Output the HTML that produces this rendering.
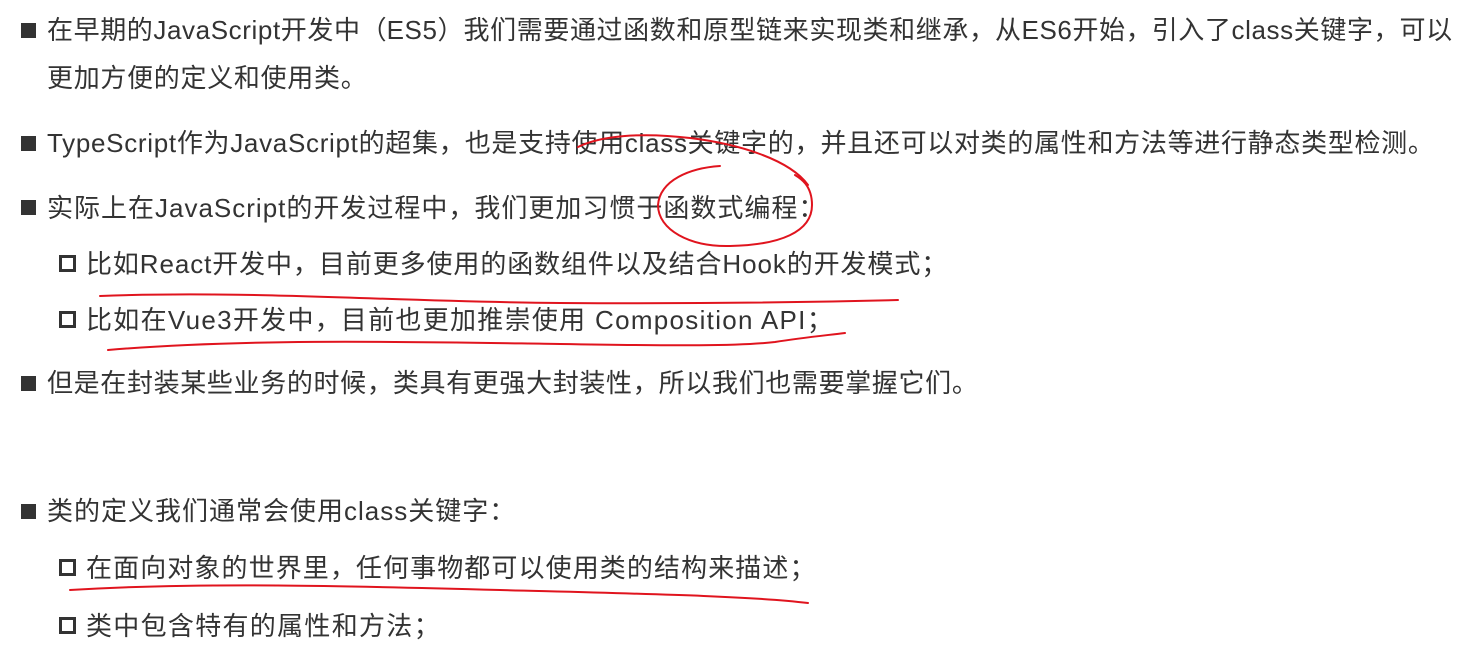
<!DOCTYPE html>
<html><head><meta charset="utf-8"><style>
html,body{margin:0;padding:0;background:#fff;width:1473px;height:664px;overflow:hidden;position:relative}
.l{position:absolute;white-space:nowrap;font-family:"Liberation Sans","Noto Sans CJK SC",sans-serif;font-size:26px;color:#333;line-height:30px;letter-spacing:0.7px}
.l i{font-style:normal;display:inline-block;width:26px;text-align:center}
.b{position:absolute;width:15px;height:15px;background:#333}
.s{position:absolute;width:11px;height:11px;border:3.5px solid #333}
svg{position:absolute;left:0;top:0}
</style></head><body>
<div class="b" style="left:21px;top:23px"></div>
<div class="l" style="left:47px;top:15px;letter-spacing:0.6px">在早期的JavaScript开发中<i>（</i>ES5<i>）</i>我们需要通过函数和原型链来实现类和继承<i>，</i>从ES6开始<i>，</i>引入了class关键字<i>，</i>可以</div>
<div class="l" style="left:47px;top:63px">更加方便的定义和使用类<i>。</i></div>
<div class="b" style="left:21px;top:136px"></div>
<div class="l" style="left:47px;top:128px">TypeScript作为JavaScript的超集<i>，</i>也是支持使用class关键字的<i>，</i>并且还可以对类的属性和方法等进行静态类型检测<i>。</i></div>
<div class="b" style="left:21px;top:200px"></div>
<div class="l" style="left:47px;top:193px;letter-spacing:1px">实际上在JavaScript的开发过程中<i>，</i>我们更加习惯于函数式编程<i>：</i></div>
<div class="s" style="left:59px;top:255px"></div>
<div class="l" style="left:86px;top:249px;letter-spacing:0.9px">比如React开发中<i>，</i>目前更多使用的函数组件以及结合Hook的开发模式<i>；</i></div>
<div class="s" style="left:59px;top:311px"></div>
<div class="l" style="left:86px;top:305px;letter-spacing:1.3px">比如在Vue3开发中<i>，</i>目前也更加推崇使用 Composition API<i>；</i></div>
<div class="b" style="left:21px;top:376px"></div>
<div class="l" style="left:47px;top:368px;letter-spacing:0.65px">但是在封装某些业务的时候<i>，</i>类具有更强大封装性<i>，</i>所以我们也需要掌握它们<i>。</i></div>
<div class="b" style="left:21px;top:504px"></div>
<div class="l" style="left:47px;top:496px;letter-spacing:1px">类的定义我们通常会使用class关键字<i>：</i></div>
<div class="s" style="left:59px;top:559px"></div>
<div class="l" style="left:86px;top:553px;letter-spacing:1.1px">在面向对象的世界里<i>，</i>任何事物都可以使用类的结构来描述<i>；</i></div>
<div class="s" style="left:59px;top:617px"></div>
<div class="l" style="left:86px;top:611px;letter-spacing:1.3px">类中包含特有的属性和方法<i>；</i></div>
<svg width="1473" height="664" fill="none" stroke="#e0141e" stroke-width="2" stroke-linecap="round">
<path d="M578,147 C600,136 640,132 690,138 C740,144 790,160 808,185"/>
<path d="M720,166 C690,168 660,180 658,205 C658,230 690,247 730,246 C780,245 812,232 812,205 C812,185 800,178 795,175"/>
<path d="M100,296 C250,290 400,302 560,303 C700,304 820,302 898,300"/>
<path d="M108,350 C250,338 420,342 560,344 C680,346 740,346 775,342 C800,338 820,336 845,333"/>
<path d="M70,590 C200,582 350,586 500,590 C650,594 750,596 808,603"/>
</svg>
</body></html>
